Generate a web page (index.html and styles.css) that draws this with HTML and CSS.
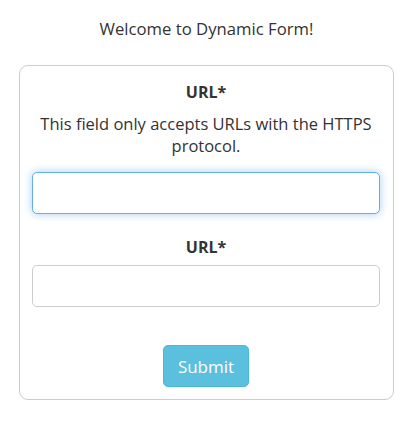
FILE: index.html
```html
<!DOCTYPE html>
<html>
<head>
<meta charset="utf-8">
<link rel="stylesheet" href="styles.css">
</head>
<body>
<div class="page">
  <p class="welcome">Welcome to Dynamic Form!</p>
  <form class="card">
    <div class="field">
      <label class="label">URL*</label>
      <p class="help">This field only accepts URLs with the HTTPS protocol.</p>
      <input class="input focused" type="text">
    </div>
    <div class="field second">
      <label class="label">URL*</label>
      <input class="input" type="text">
    </div>
    <div class="actions">
      <button type="button" class="btn">Submit</button>
    </div>
  </form>
</div>
</body>
</html>
```
FILE: styles.css
```css
html, body {
  margin: 0;
  padding: 0;
  background: #fff;
}
body {
  font-family: "Open Sans", "Noto Sans", sans-serif;
  color: #333;
}
.page {
  padding: 17px 17px 0 19px;
}
.welcome {
  margin: 0 0 24px;
  text-align: center;
  font-size: 16.7px;
  line-height: 24px;
}
.card {
  width: 348px;
  border: 1px solid #ccc;
  border-radius: 9px;
  padding: 14px 13px 12px 12px;
  margin: 0;
}
.field {
  display: flex;
  flex-direction: column;
  align-items: stretch;
  text-align: center;
}
.field.second {
  margin-top: 21px;
}
.label {
  font-weight: 700;
  font-size: 16px;
  line-height: 24px;
}
.help {
  margin: 9px 0 15px;
  font-size: 16.5px;
  line-height: 22px;
}
.label + .input {
  margin-top: 6px;
}
.input {
  box-sizing: border-box;
  height: 42px;
  width: 100%;
  border: 1px solid #ccc;
  border-radius: 5px;
  margin: 0;
  padding: 6px 12px;
  font: inherit;
  outline: none;
  background: #fff;
}
.input.focused {
  border-color: #66afe9;
  box-shadow: 0 0 8px rgba(102, 175, 233, 0.6);
}
.actions {
  display: flex;
  justify-content: center;
  padding-top: 38px;
}
.btn {
  width: 86px;
  height: 42px;
  background: #5bc0de;
  border: 1px solid #46b8da;
  border-radius: 5px;
  color: #fff;
  font-family: inherit;
  font-size: 17px;
  padding: 0;
  cursor: pointer;
}
```
